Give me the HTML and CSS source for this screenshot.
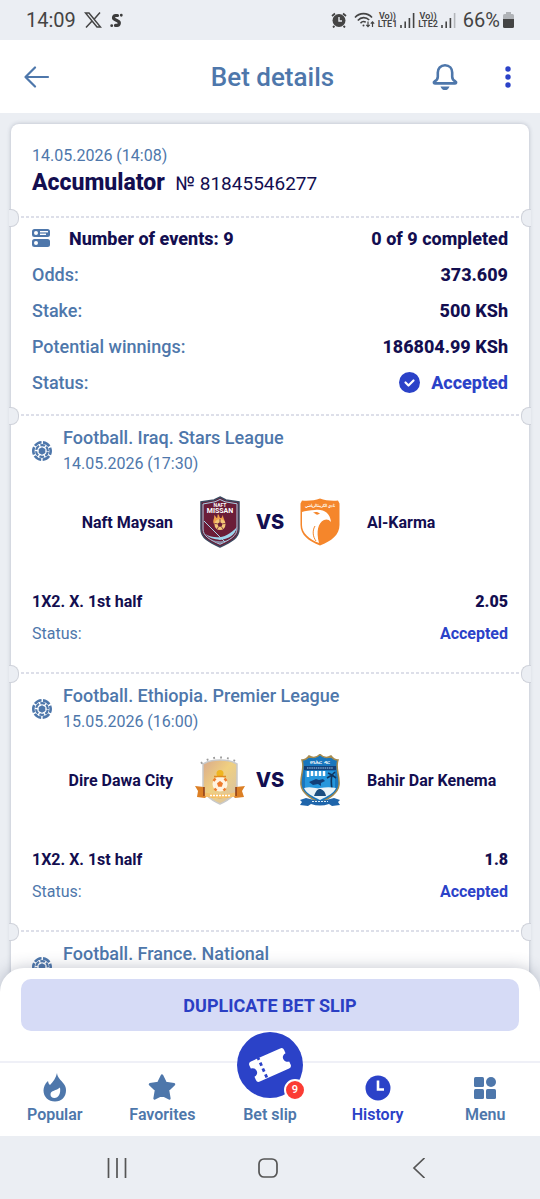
FILE: index.html
```html
<!DOCTYPE html>
<html lang="en">

<head>
    <meta charset="UTF-8">
    <meta name="viewport" content="width=device-width, initial-scale=1.0">
    <title>Bet details</title>
    <link rel="stylesheet" href="styles.css">
</head>

<body>
    <!-- Shared icon -->
    <svg class="sprite" width="0" height="0" aria-hidden="true">
        <symbol id="ball" viewBox="0 0 20 20">
            <path d="M10 6.200l3.300 1.900v3.800L10 13.800l-3.300-1.900V8.100z" fill="currentColor"/>
            <circle cx="10" cy="10" r="5.900" fill="none" stroke="currentColor" stroke-width="2.200" stroke-dasharray="4.800 1.378" stroke-dashoffset="-.7"/>
            <circle cx="10" cy="10" r="8.700" fill="none" stroke="currentColor" stroke-width="2.600" stroke-dasharray="7.600 1.511" stroke-dashoffset="3.800"/>
        </symbol>
    </svg>

    <div class="status-bar">
        <span class="clock">14:09</span>
        <svg class="x-icon" width="18" height="16" viewBox="0 0 18 16" fill="none" stroke="#444" stroke-width="1.500">
            <path d="M1.500 1H5l11.500 14H13z"/>
            <path d="M16 .5L10.300 7M7.800 9.300L2 15.500"/>
        </svg>
        <svg width="13" height="15" viewBox="0 0 13 15" fill="none" stroke="#3c3c3c" stroke-linecap="round">
            <path d="M7.500 2.500H5.500a2 2 0 0 0-.8 3.800L8 8.200a2.200 2.200 0 0 1-1 4.200H5.500" stroke-width="3.200"/>
            <path d="M11.300 2.200v.1M1.700 12.600v.1" stroke-width="2.800"/>
        </svg>
        <div class="status-right">
            <svg width="16" height="16" viewBox="0 0 16 16">
                <circle cx="8" cy="8.500" r="6.500" fill="#444"/>
                <path d="M1 4l3-2.500M15 4l-3-2.500M3.500 14L2 15.500M12.500 14l1.500 1.500" stroke="#444" stroke-width="1.800"/>
                <path d="M8 5v4h3" stroke="#ebeef3" stroke-width="1.400" fill="none"/>
            </svg>
            <svg class="wifi" width="21" height="16" viewBox="0 0 21 16" fill="none" stroke="#444" stroke-width="1.600">
                <path d="M1 5.500C5.500.3 13.500.3 18 5.500M3.800 8.500c3.300-3.700 8.200-3.700 11.400-.5M6.500 11.200c1.500-1.800 3.600-2 5.200-1"/>
                <circle cx="9.500" cy="13.500" r="1" fill="#444" stroke="none"/>
                <path d="M14 9.500v5M12.300 12.800l1.700 1.900 1.700-1.900M18.500 15v-5M16.800 11.700l1.700-1.900 1.700 1.900" stroke-width="1.200"/>
            </svg>
            <span class="lte">Vo))<br>LTE1</span>
            <svg class="bars" width="15" height="15" viewBox="0 0 15 15" stroke="#444" stroke-width="1.600">
                <path d="M1 12v3M5.200 8.500V15M9.400 5v10M13.600 0v15"/>
            </svg>
            <span class="lte">Vo))<br>LTE2</span>
            <svg class="bars" width="15" height="15" viewBox="0 0 15 15" stroke="#444" stroke-width="1.600">
                <path d="M1 12v3M5.200 8.500V15M9.400 5v10"/>
                <path d="M13.600 0v15" stroke="#b3b6ba"/>
            </svg>
            <span class="battery-text">66%</span>
            <svg width="11" height="16" viewBox="0 0 11 16">
                <path d="M3 0h5v2h1.500A1.500 1.500 0 0 1 11 3.500V7H0V3.500A1.500 1.500 0 0 1 1.500 2H3z" fill="#b0b3b7"/>
                <path d="M0 7h11v7.500a1.500 1.500 0 0 1-1.500 1.500h-8A1.500 1.500 0 0 1 0 14.500z" fill="#444"/>
            </svg>
        </div>
    </div>

    <header class="top-bar">
        <button class="icon-button" type="button" aria-label="Back">
            <svg width="26" height="22" viewBox="0 0 26 22" fill="none" stroke="#4e77ab" stroke-width="2.200" stroke-linecap="round" stroke-linejoin="round">
                <path d="M11 1.500L1.500 11l9.500 9.500M1.500 11H24"/>
            </svg>
        </button>
        <h1>Bet details</h1>
        <div class="top-actions">
            <button class="icon-button" type="button" aria-label="Notifications">
                <svg width="26" height="28" viewBox="0 0 26 28" fill="none" stroke="#4e77ab" stroke-width="2.600" stroke-linejoin="round">
                    <path d="M13 2.200c-4.500 0-7.200 3.200-7.200 7.300v4.200c0 2.500-1.200 3.700-3.300 4.800-1 .6-.8 1.900.4 1.900h20.200c1.200 0 1.400-1.300.4-1.900-2.100-1.100-3.300-2.300-3.300-4.800V9.500c0-4.100-2.700-7.300-7.200-7.300z"/>
                    <path d="M8.500 23.400h9c-.8 2.400-2.400 3.600-4.500 3.600s-3.700-1.200-4.500-3.600z" fill="#4e77ab" stroke="none"/>
                </svg>
            </button>
            <button class="icon-button" type="button" aria-label="More">
                <svg width="6" height="22" viewBox="0 0 6 22" fill="#2b42c8">
                    <circle cx="3" cy="3" r="2.700"/>
                    <circle cx="3" cy="11" r="2.700"/>
                    <circle cx="3" cy="19" r="2.700"/>
                </svg>
            </button>
        </div>
    </header>

    <main>
        <div class="slip">
            <section class="slip-head">
                <p class="slip-date">14.05.2026 (14:08)</p>
                <h2>Accumulator <span>№ 81845546277</span></h2>
            </section>

            <section class="summary tear">
                <div class="row row-events">
                    <svg width="18" height="18" viewBox="0 0 18 18" fill="#4e77ab">
                        <rect width="18" height="8" rx="2.500"/>
                        <rect y="10" width="18" height="8" rx="2.500"/>
                        <g fill="#fff">
                            <circle cx="4" cy="4" r="2"/>
                            <circle cx="4" cy="14" r="2"/>
                            <rect x="8" y="2" width="8" height="1.400"/>
                            <rect x="8" y="4.600" width="6" height="1.400"/>
                        </g>
                    </svg>
                    <strong class="events">Number of events: 9</strong>
                    <strong class="value">0 of 9 completed</strong>
                </div>
                <div class="row"><span>Odds:</span><strong class="value">373.609</strong></div>
                <div class="row"><span>Stake:</span><strong class="value">500 KSh</strong></div>
                <div class="row"><span>Potential winnings:</span><strong class="value">186804.99 KSh</strong></div>
                <div class="row">
                    <span>Status:</span>
                    <strong class="value accepted">
                        <svg width="21" height="21" viewBox="0 0 21 21">
                            <circle cx="10.500" cy="10.500" r="10.500" fill="#2b42c8"/>
                            <path d="M6.500 10.500l3 3 5-5" fill="none" stroke="#fff" stroke-width="2.200" stroke-linecap="round" stroke-linejoin="round"/>
                        </svg>
                        Accepted
                    </strong>
                </div>
            </section>

            <section class="match tear">
                <div class="league">
                    <svg width="20" height="20"><use href="#ball"/></svg>
                    <div>
                        <h3>Football. Iraq. Stars League</h3>
                        <p>14.05.2026 (17:30)</p>
                    </div>
                </div>
                <div class="teams">
                    <span class="home">Naft Maysan</span>
                    <svg width="40" height="52" viewBox="0 0 40 52">
                        <path d="M20 1l6 3 13 2v27c0 9-8 13-19 18C9 46 1 42 1 33V6l13-2z" fill="#6b1d38" stroke="#3c4a60" stroke-width="1.500"/>
                        <path d="M20 3.500l5 2.300 12 2v25c0 7-7 11-17 15.500C10 44 3 40 3 33V8l12-2.200z" fill="none" stroke="#a9d3e6" stroke-width="1"/>
                        <path d="M4 25l21 21" stroke="#a9d3e6" stroke-width="1"/>
                        <path d="M5 38c11 6 22 4 32-7-2 9-9 12-17 13-6-1-11-2-15-6z" fill="#9fd4ec"/>
                        <path d="M10 43c7 3 14 3 20 0l-10 5z" fill="#9fd4ec" opacity=".6"/>
                        <path d="M14 28c-2-4 1-5 0-9 2 1 2 3 3 3 1-1 0-3 1-4 2 2 1 4 3 4 1 0 1-2 2-3 0 4 3 6 2 9z" fill="#f0a04b"/>
                        <circle cx="20" cy="28.500" r="5.500" fill="#f4c878"/>
                        <path d="M20 26l2.500 1.800-.9 3h-3.200l-.9-3z" fill="#6b1d38"/>
                        <path d="M20 23v3M14.500 27.500l3 .3M25.500 27.500l-3 .3M18.400 31l-1.400 2M21.600 31l1.400 2" stroke="#6b1d38" stroke-width=".8"/>
                        <text class="crest-text" x="20" y="11" font-size="5" fill="#fff">NAFT</text>
                        <text class="crest-text" x="20" y="17" font-size="7" fill="#fff">MISSAN</text>
                    </svg>
                    <span class="vs">VS</span>
                    <svg width="40" height="48" viewBox="0 0 40 48">
                        <path d="M20 .5C25 2.500 32 3 38 2.500l1.500 3V27c0 10-8 16-19.500 20.500C8.500 43 .5 37 .5 27V5.500L2 2.500c6 .5 13 0 18-2z" fill="#f5862b"/>
                        <path d="M2 14c3-1 8-2 13-2 9-1 15 3 16 12-2-3-5-3-7-2-6 3-8 11-5 23C9 41 2 35 2 27z" fill="#fff"/>
                        <path d="M15 28c-3 5-2 11 1 15" fill="none" stroke="#f5862b" stroke-width="1"/>
                        <path d="M13 14.500c3-1 5-.5 7 1-2 1.500-4 1.500-5 0z" fill="#f5862b"/>
                        <text class="crest-text" x="20" y="9" font-size="4" fill="#fff">نادي الكرمة الرياضي</text>
                    </svg>
                    <span class="away">Al-Karma</span>
                </div>
                <div class="pick"><span>1X2. X. 1st half</span><strong>2.05</strong></div>
                <div class="pick-status"><span>Status:</span><strong>Accepted</strong></div>
            </section>

            <section class="match tear">
                <div class="league">
                    <svg width="20" height="20"><use href="#ball"/></svg>
                    <div>
                        <h3>Football. Ethiopia. Premier League</h3>
                        <p>15.05.2026 (16:00)</p>
                    </div>
                </div>
                <div class="teams">
                    <span class="home">Dire Dawa City</span>
                    <svg width="50" height="50" viewBox="0 0 50 50">
                        <defs>
                            <linearGradient id="gold" x1="0" y1="0" x2="1" y2="1">
                                <stop offset="0" stop-color="#d8a98c"/>
                                <stop offset=".45" stop-color="#f0d080"/>
                                <stop offset="1" stop-color="#d3c0aa"/>
                            </linearGradient>
                        </defs>
                        <path d="M25 5c6 0 12 1 17 4v22c0 9-8 14-17 18C16 45 8 40 8 31V9c5-3 11-4 17-4z" fill="url(#gold)" stroke="#c9c9c9" stroke-width="1.500"/>
                        <path d="M6 8.500C15 .5 35 .5 44 8.500" fill="none" stroke="#9b9b9b" stroke-width="2" stroke-dasharray="1.800 5"/>
                        <circle cx="25" cy="29" r="7.500" fill="#fff3e0"/>
                        <path d="M25 26l3 2.300-1.200 3.400h-3.600L22 28.300z" fill="#ee7b2c"/>
                        <path d="M18.500 26l2-2.500M31.500 26l-2-2.500M19.500 33.500l2 2M30.500 33.500l-2 2" stroke="#ee7b2c" stroke-width="2.400"/>
                        <circle cx="25" cy="18.500" r="3.500" fill="#efb520"/>
                        <path d="M19 21.500h12" stroke="#e08a1f" stroke-width="1.500"/>
                        <path d="M0 31l9 1v7c8 4 24 4 32 0v-7l9-1-3 5 2 6-9 1-2-2c-9 3-17 3-26 0l-2 2-8-1 1-6z" fill="#dc7f24"/>
                        <path d="M9 37c9 3 23 3 32 0v4c-9 3-23 3-32 0z" fill="#f6c26b"/>
                        <path d="M15 40.500h20" stroke="#fff" stroke-width="1.500" stroke-dasharray="2 1"/>
                        <path d="M9 32v9M41 32v9" stroke="#8c3b16" stroke-width="1.500"/>
                    </svg>
                    <span class="vs">VS</span>
                    <svg width="42" height="52" viewBox="0 0 42 52">
                        <path d="M21 .5c3 3 7 4 11 1.500 2 3 4 4 7 4-3 9 2 15 1 25-1 8-9 13-19 18C11 44 3 39 2 31 1 21 6 15 3 6c3 0 5-1 7-4 4 2.500 8 1.500 11-1.500z" fill="#1976bd" stroke="#a58a4e" stroke-width="1.500"/>
                        <path d="M5 12h32v4H5z" fill="#123f78"/>
                        <path d="M6 17h30v17H6z" fill="#2596dc"/>
                        <path d="M9 17v6M13 17v5M17 17v5M21 17v5M25 17v5" stroke="#fff" stroke-width="2.500"/>
                        <path d="M33 35c-1-6-1-10 0-14M33 21l-5 3M33 21l4 3M33 21l-4-2M33 21l3-3" stroke="#10355f" stroke-width="1.600" fill="none"/>
                        <path d="M10 28l7-3 3 1 4-1 2 2-4 2v3l-3-2-5 1z" fill="#123f78"/>
                        <path d="M5 34c8-2 10 1 16 0s11-1 16 0c-2 5-8 8-16 12C13 42 7 39 5 34z" fill="#e9f3f8"/>
                        <path d="M15 42c2-6 4-7 6-7s5 2 6 7z" fill="#1b4e80"/>
                        <path d="M1 46l6-2 4 1c7 2 13 2 20 0l4-1 6 2-2 2 2 3-8 1-3-2c-6 2-12 2-18 0l-3 2-8-1 2-3z" fill="#1f65ab"/>
                        <path d="M13 47.500h16" stroke="#d9ecf8" stroke-dasharray="2 1"/>
                        <text class="crest-text" x="21" y="10" font-size="5" fill="#fff">የባሕር ዳር</text>
                        <path d="M8 14h26" stroke="#a9cce8" stroke-width="1.200" stroke-dasharray="1.500 .7"/>
                    </svg>
                    <span class="away">Bahir Dar Kenema</span>
                </div>
                <div class="pick"><span>1X2. X. 1st half</span><strong>1.8</strong></div>
                <div class="pick-status"><span>Status:</span><strong>Accepted</strong></div>
            </section>

            <section class="match tear">
                <div class="league">
                    <svg width="20" height="20"><use href="#ball"/></svg>
                    <div>
                        <h3>Football. France. National</h3>
                    </div>
                </div>
            </section>
        </div>
    </main>

    <footer>
        <div class="duplicate">
            <button type="button">DUPLICATE BET SLIP</button>
        </div>
        <nav class="tabs">
            <a href="#popular">
                <svg width="24" height="29" viewBox="0 0 24 29">
                    <path d="M14 0c.5 5 4 7 6.500 10.500C22.500 13 23 15 23 17.500 23 24 18.500 28.500 12 28.500S.5 24 .5 17.500C.5 14 2 10.500 5 8c.3 2 .8 3.300 2 4C10 9 13 5 14 0z" fill="currentColor"/>
                    <path d="M17 14.500c1 6-1.500 10.500-5.500 10.500C9 25 7.500 23.500 7.500 21.500c0-4.500 6-3.500 9.500-7z" fill="#fff"/>
                </svg>
                Popular
            </a>
            <a href="#favorites">
                <svg width="28" height="29" viewBox="0 0 28 29">
                    <path d="M14 2.500l3.700 7.600 8.300 1.200-6 5.900 1.400 8.300-7.400-3.900-7.400 3.900L8 17.200l-6-5.900 8.300-1.200z" fill="currentColor" stroke="currentColor" stroke-width="2.500" stroke-linejoin="round"/>
                </svg>
                Favorites
            </a>
            <a class="bet-slip" href="#slip">
                <span class="slip-circle">
                    <svg width="44" height="44" viewBox="0 0 44 44">
                        <g transform="rotate(-24 22 22)">
                            <path d="M6 11h32a3 3 0 0 1 3 3v3.500a4.500 4.500 0 0 0 0 9V30a3 3 0 0 1-3 3H6a3 3 0 0 1-3-3v-3.500a4.500 4.500 0 0 0 0-9V14a3 3 0 0 1 3-3z" fill="#fff"/>
                            <path d="M14 10.500v23" stroke="#2b42c8" stroke-width="2.800" stroke-dasharray="3.400 3" stroke-dashoffset="1"/>
                        </g>
                    </svg>
                    <span class="badge">9</span>
                </span>
                Bet slip
            </a>
            <a class="active" href="#history">
                <svg width="26" height="29" viewBox="0 0 26 29">
                    <circle cx="13" cy="15" r="12.500" fill="currentColor"/>
                    <path d="M13 7.500v9h6" fill="none" stroke="#fff" stroke-width="2.600"/>
                </svg>
                History
            </a>
            <a href="#menu">
                <svg width="24" height="29" viewBox="0 0 24 29" fill="currentColor">
                    <rect x="1" y="4" width="10" height="10" rx="1.500"/>
                    <circle cx="18" cy="9" r="5"/>
                    <rect x="1" y="16" width="10" height="10" rx="1.500"/>
                    <rect x="13" y="16" width="10" height="10" rx="1.500"/>
                </svg>
                Menu
            </a>
        </nav>
        <div class="system-nav">
            <button type="button" aria-label="Recent apps">
                <svg width="20" height="20" viewBox="0 0 20 20" stroke="#555" stroke-width="1.700">
                    <path d="M1.500 0v20M10 0v20M18.500 0v20"/>
                </svg>
            </button>
            <button type="button" aria-label="Home">
                <svg width="20" height="20" viewBox="0 0 20 20" fill="none" stroke="#555" stroke-width="1.700">
                    <rect x="1" y="1" width="18" height="18" rx="5"/>
                </svg>
            </button>
            <button type="button" aria-label="Back">
                <svg width="14" height="20" viewBox="0 0 14 20" fill="none" stroke="#555" stroke-width="1.700">
                    <path d="M12.500 0L2 10l10.500 10"/>
                </svg>
            </button>
        </div>
    </footer>
</body>

</html>
```
FILE: styles.css
```css
* {
    box-sizing: border-box;
}

body {
    margin: 0;
    height: 100vh;
    display: flex;
    flex-direction: column;
    overflow: hidden;
    background-color: #ebeef3;
    color: #130e50; /* Dark navy */
    font-family: Roboto, "Liberation Sans", sans-serif;
}

h1, h2, h3, p {
    margin: 0;
}

button {
    border: none;
    background: none;
    padding: 0;
    font-family: inherit;
    cursor: pointer;
}

svg {
    display: block;
    flex-shrink: 0;
}

.sprite {
    position: absolute;
}

/* Phone status bar */
.status-bar {
    flex: none;
    height: 40px;
    display: flex;
    align-items: center;
    padding: 0 26px;
    color: #444;
    font-size: 20px;
}

.x-icon {
    margin: 0 8px;
}

.status-right {
    margin-left: auto;
    display: flex;
    align-items: center;
    gap: 3px;
}

.wifi {
    margin-left: 4px;
}

.lte {
    font-size: 9px;
    font-weight: 600;
    line-height: 8px;
    text-align: center;
}

.battery-text {
    margin-left: 4px;
}

/* Top bar */
.top-bar {
    flex: none;
    display: grid;
    grid-template-columns: 1fr auto 1fr;
    align-items: center;
    height: 73px;
    padding: 0 24px;
    background-color: #fff;
}

.top-bar h1 {
    padding-left: 5px;
    color: #4e77ab;
    font-size: 26px;
    font-weight: 500;
}

.icon-button {
    justify-self: start;
}

.top-actions {
    display: flex;
    align-items: center;
    justify-content: flex-end;
    gap: 47px;
    padding-right: 5px;
}

/* Slip */
main {
    flex: 1;
    min-height: 0;
    overflow: hidden;
    padding: 11px 11px 0;
}

.slip {
    border-radius: 8px;
    background-color: #fff;
    box-shadow: 0 0 4px rgba(60, 70, 100, 0.3);
}

.slip section {
    padding: 0 21px;
}

/* Dotted line with a notch on both sides */
.tear {
    position: relative;
    background: repeating-linear-gradient(90deg, #dddfe9 0 3px, #fff 3px 5px) top / 100% 2px no-repeat;
}

.tear::before,
.tear::after {
    content: '';
    position: absolute;
    top: -7px;
    width: 9px;
    height: 16px;
    background-color: #ebeef3;
    border: 1px solid #cfd2da;
}

.tear::before {
    left: -2px;
    border-left: none;
    border-radius: 0 8px 8px 0;
}

.tear::after {
    right: -2px;
    border-right: none;
    border-radius: 8px 0 0 8px;
}

.slip .slip-head {
    padding-top: 20px;
    padding-bottom: 18px;
}

.slip-date {
    color: #4e77ab;
    font-size: 16px;
    line-height: 24px;
}

.slip-head h2 {
    font-size: 23px;
    font-weight: 800;
    line-height: 30px;
}

.slip-head h2 span {
    margin-left: 5px;
    font-size: 19px;
    font-weight: 400;
    line-height: 20px;
}

.slip .summary {
    padding-top: 4px;
    padding-bottom: 14px;
}

.row {
    display: flex;
    align-items: center;
    height: 36px;
    color: #4e77ab;
    font-size: 18px;
    font-weight: 500;
}

.row strong {
    color: #130e50;
    font-weight: 800;
}

.events {
    margin-left: 19px;
}

.value {
    margin-left: auto;
}

.row .accepted {
    display: flex;
    align-items: center;
    gap: 11px;
    color: #2b42c8;
}

.slip .match {
    padding-top: 11px;
    padding-bottom: 22px;
}

.league {
    display: flex;
    align-items: center;
    gap: 11px;
    color: #4e77ab;
}

.league div {
    min-height: 52px;
}

.league h3 {
    font-size: 18px;
    font-weight: 500;
    line-height: 26px;
}

.league p {
    font-size: 16px;
    line-height: 26px;
}

.teams {
    display: grid;
    grid-template-columns: 1fr 50px 50px 50px 1fr;
    align-items: center;
    justify-items: center;
    height: 56px;
    margin: 17px 0 36px;
    font-size: 16px;
    font-weight: 700;
}

.home {
    justify-self: end;
    margin-right: 22px;
}

.away {
    justify-self: start;
    margin-left: 22px;
}

.vs {
    font-family: Inter, sans-serif;
    font-size: 20px;
    font-weight: 800;
}

.crest-text {
    font-family: Roboto, sans-serif;
    font-weight: 700;
    text-anchor: middle;
}

.pick,
.pick-status {
    display: flex;
    justify-content: space-between;
    font-size: 16px;
    line-height: 32px;
}

.pick {
    font-weight: 700;
}

.pick-status {
    color: #4e77ab;
}

.pick-status strong {
    color: #2b42c8;
}

/* Bottom panel */
footer {
    position: relative;
    flex: none;
    margin-top: -24px;
    border-radius: 24px 24px 0 0;
    background-color: #fff;
    box-shadow: 0 0 16px rgba(50, 60, 90, 0.3);
}

.duplicate {
    padding: 11px 21px 30px;
}

.duplicate button {
    width: 100%;
    height: 52px;
    border-radius: 10px;
    background-color: #d6dbf6;
    color: #2b3fc4;
    font-size: 18px;
    font-weight: 700;
}

.tabs {
    display: grid;
    grid-template-columns: repeat(5, 1fr);
    height: 75px;
    padding: 0 1px;
    border-top: 2px solid #eff0f7;
}

.tabs a {
    display: flex;
    flex-direction: column;
    align-items: center;
    justify-content: flex-end;
    padding-bottom: 10px;
    color: #4e77ab;
    font-size: 16px;
    font-weight: 600;
    line-height: 22px;
    text-decoration: none;
}

.tabs a > svg {
    margin-bottom: 2px;
}

.tabs .active {
    color: #2b42c8;
}

/* The round button rises above the tab bar */
.slip-circle {
    position: relative;
    display: flex;
    align-items: center;
    justify-content: center;
    width: 66px;
    height: 66px;
    margin-top: -40px;
    margin-bottom: 6px;
    border-radius: 50%;
    background-color: #2b42c8;
}

.badge {
    position: absolute;
    right: -3px;
    bottom: -3px;
    width: 22px;
    height: 22px;
    border: 2px solid #fff;
    border-radius: 50%;
    background-color: #fb3c34;
    color: #fff;
    font-size: 11px;
    line-height: 18px;
    text-align: center;
}

.system-nav {
    display: grid;
    grid-template-columns: repeat(3, 1fr);
    justify-items: center;
    align-items: center;
    height: 63px;
    padding: 0 46px 0 41px;
    background-color: #ebeef3;
}
```
